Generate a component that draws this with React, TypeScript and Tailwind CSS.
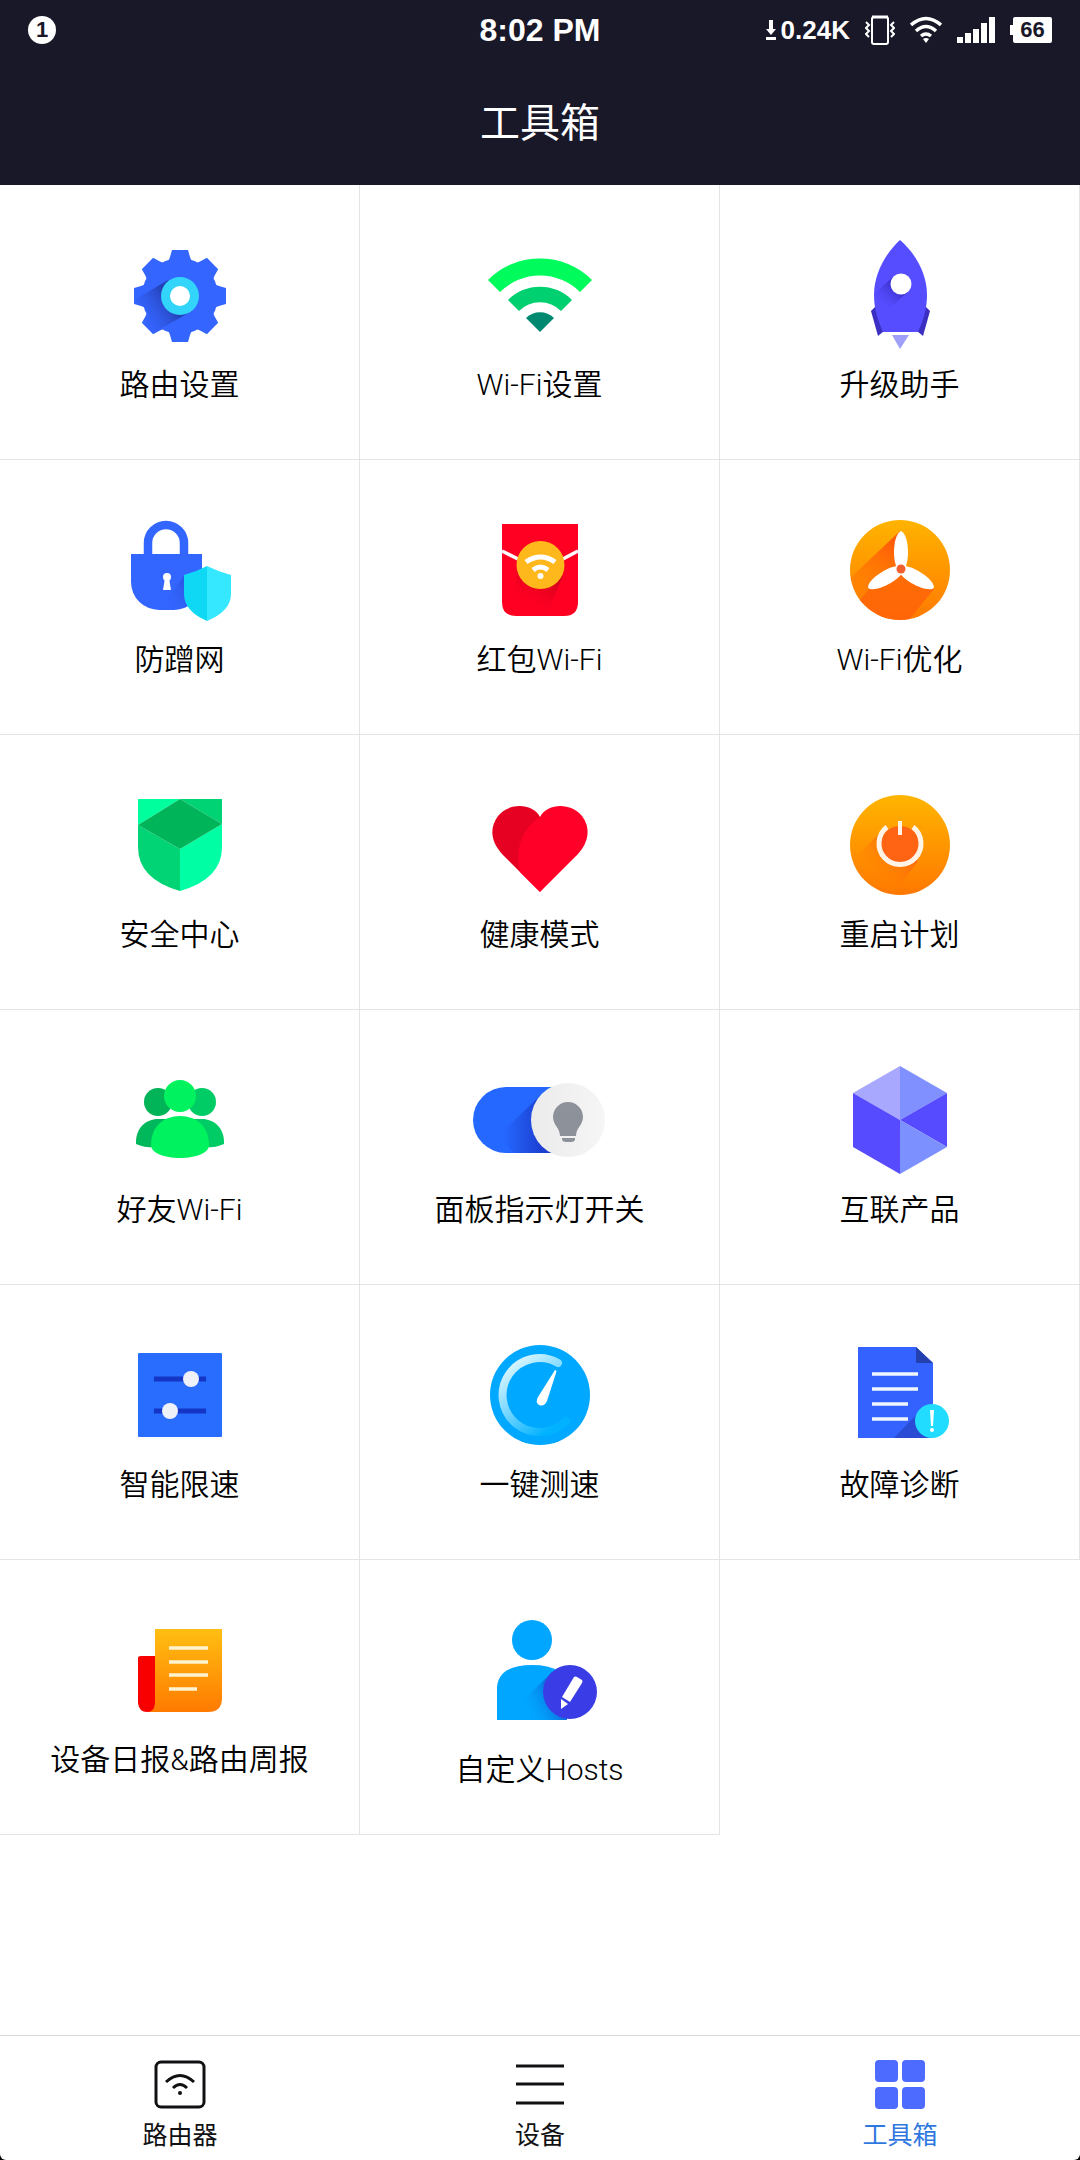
import { useState } from 'react'
import type { ReactNode } from 'react'

type Tool = {
  label: string
  icon: ReactNode
  tall?: boolean
}

type Tab = {
  key: string
  label: string
  icon: ReactNode
}

const TEETH = [0, 45, 90, 135, 180, 225, 270, 315]

const GearIcon = (
  <>
    <defs>
      <linearGradient id="gear-shade" x1="62" y1="66" x2="28" y2="88" gradientUnits="userSpaceOnUse">
        <stop offset="0" stopColor="#2442b8" />
        <stop offset="1" stopColor="#3565ff" stopOpacity="0" />
      </linearGradient>
    </defs>
    <circle cx="72" cy="61" r="38" fill="#3565ff" />
    {TEETH.map((deg) => (
      <path key={deg} d="M60 27 L62 22 L64 15 H80 L82 22 L84 27Z" fill="#3565ff" transform={`rotate(${deg} 72 61)`} />
    ))}
    <path d="M60 45 L28 64 L30 70 L37 72 L41 82 L36 90 L45 98 L84 76Z" fill="url(#gear-shade)" />
    <circle cx="72" cy="61" r="19" fill="#33d4fa" />
    <circle cx="72" cy="61" r="10" fill="#fff" />
  </>
)

const WifiIcon = (
  <>
    <path d="M20 45 A73.5 73.5 0 0 1 124 45 L112 57 A57 57 0 0 0 32 57Z" fill="#00fc5c" />
    <path d="M40 65 A45 45 0 0 1 104 65 L93 76 A29.5 29.5 0 0 0 51 76Z" fill="#00d070" />
    <path d="M58 83 A20 20 0 0 1 86 83 L72 97Z" fill="#008970" />
  </>
)

const RocketIcon = (
  <>
    <defs>
      <linearGradient id="rocket-shade" x1="70" y1="52" x2="52" y2="72" gradientUnits="userSpaceOnUse">
        <stop offset="0" stopColor="#3b2fc8" />
        <stop offset="1" stopColor="#554dff" stopOpacity="0" />
      </linearGradient>
    </defs>
    <path d="M48 71 L43 76 L50 101 L56 96Z" fill="#3a2fc0" />
    <path d="M97 71 L102 76 L95 101 L89 96Z" fill="#3a2fc0" />
    <path d="M72 5 C58 18 46 38 46 60 C46 74 50 86 55 97 H90 C95 86 99 74 99 60 C99 38 87 18 72 5Z" fill="#554dff" />
    <path d="M65 42 L47 58 Q46 72 54 80 L81 56Z" fill="url(#rocket-shade)" />
    <circle cx="73" cy="49" r="10.5" fill="#fff" />
    <path d="M64 100 H81 L72 114Z" fill="#a09ffa" />
  </>
)

const LockIcon = (
  <>
    <defs>
      <linearGradient id="lock-shade" x1="96" y1="75" x2="56" y2="96" gradientUnits="userSpaceOnUse">
        <stop offset="0" stopColor="#2343c4" />
        <stop offset="1" stopColor="#3366ff" stopOpacity="0" />
      </linearGradient>
    </defs>
    <path d="M40 46 V33 A18 18 0 0 1 76 33 V46" fill="none" stroke="#3366ff" strokeWidth="8.5" />
    <path d="M23 44 H94 V72 A28 28 0 0 1 66 100 H51 A28 28 0 0 1 23 72Z" fill="#3366ff" />
    <path d="M94 60 L76 66 L50 100 H66 A28 28 0 0 0 94 72Z" fill="url(#lock-shade)" />
    <circle cx="59" cy="67" r="4" fill="#fff" />
    <path d="M57 68 H61 L63 80 H55Z" fill="#fff" />
    <path d="M99 56 Q88 62 76 65 V84 Q76 101 99 111Z" fill="#0fd8f4" />
    <path d="M99 56 Q111 62 123 65 V84 Q123 101 99 111Z" fill="#35e8ff" />
  </>
)

const RedPacketIcon = (
  <>
    <defs>
      <linearGradient id="packet-shade" x1="72" y1="60" x2="50" y2="96" gradientUnits="userSpaceOnUse">
        <stop offset="0" stopColor="#d4001c" />
        <stop offset="1" stopColor="#ff0022" stopOpacity="0" />
      </linearGradient>
    </defs>
    <path d="M34 14 H110 V92 Q110 106 96 106 H48 Q34 106 34 92Z" fill="#ff0022" />
    <path d="M49 58 L44 106 H78 L95 66Z" fill="url(#packet-shade)" />
    <path d="M34 41 L52 50 M110 41 L93 50" stroke="#fff" strokeWidth="3.5" />
    <circle cx="72.5" cy="55" r="24" fill="#ffb81c" />
    <path d="M58 52 Q72.5 42 87 52 M65 60 Q72.5 54 80 60" fill="none" stroke="#fff" strokeWidth="5" />
    <circle cx="72.5" cy="66" r="3" fill="#fff" />
  </>
)

const FanIcon = (
  <>
    <defs>
      <linearGradient id="fan-bg" x1="0" y1="10" x2="0" y2="110" gradientUnits="userSpaceOnUse">
        <stop offset="0" stopColor="#ffb300" />
        <stop offset="1" stopColor="#ff7a00" />
      </linearGradient>
      <linearGradient id="fan-shade" x1="80" y1="40" x2="42" y2="100" gradientUnits="userSpaceOnUse">
        <stop offset="0" stopColor="#ff5a0a" />
        <stop offset="1" stopColor="#ff6a00" stopOpacity="0.1" />
      </linearGradient>
      <clipPath id="fan-clip">
        <circle cx="72" cy="60" r="50" />
      </clipPath>
    </defs>
    <circle cx="72" cy="60" r="50" fill="url(#fan-bg)" />
    <g clipPath="url(#fan-clip)">
      <path d="M72 21 L18 72 L24 98 L42 78 L73 60Z" fill="url(#fan-shade)" />
      <path d="M73 62 L42 78 L30 92 L60 116 L76 116 L106 79Z" fill="#ff5f0a" opacity="0.75" />
    </g>
    {[0, 120, 240].map((deg) => (
      <path
        key={deg}
        d="M73 21 C78 23 80 34 80 42 C80 49 79 53 77 59 H69 C67 53 66 49 66 42 C66 34 68 23 73 21Z"
        fill="#fff"
        transform={`rotate(${deg} 73 59)`}
      />
    ))}
    <circle cx="73" cy="59" r="4.5" fill="#f0602c" />
  </>
)

const ShieldIcon = (
  <>
    <path d="M30 14 H72 L30 40Z" fill="#00ff9d" />
    <path d="M72 14 H114 V39Z" fill="#00d373" />
    <path d="M30 40 L72 64 V106 Q30 94 30 62Z" fill="#00d474" />
    <path d="M114 39 L72 64 V106 Q114 94 114 62Z" fill="#00ffa4" />
    <path d="M72 14 L114 39 L72 64 L30 40Z" fill="#00b45a" />
  </>
)

const HeartIcon = (
  <>
    <path d="M72 32 C64 17 40 18 30 31 C21 43 23 57 34 69 L72 107 L80 60Z" fill="#e60022" />
    <path d="M72 32 C80 17 104 18 114 31 C123 43 121 57 110 69 L72 107 L52 87 C46 62 56 42 72 32Z" fill="#ff0028" />
  </>
)

const PowerIcon = (
  <>
    <defs>
      <linearGradient id="power-bg" x1="0" y1="10" x2="0" y2="110" gradientUnits="userSpaceOnUse">
        <stop offset="0" stopColor="#ffb500" />
        <stop offset="1" stopColor="#ff7800" />
      </linearGradient>
      <linearGradient id="power-shade" x1="76" y1="66" x2="44" y2="98" gradientUnits="userSpaceOnUse">
        <stop offset="0" stopColor="#ff6a0a" />
        <stop offset="1" stopColor="#ff8a00" stopOpacity="0" />
      </linearGradient>
    </defs>
    <circle cx="72" cy="60" r="50" fill="url(#power-bg)" />
    <path d="M54 46 L28 72 Q36 98 66 108 L90 76Z" fill="url(#power-shade)" />
    <circle cx="72" cy="61" r="20" fill="#ff6414" />
    <path d="M59 42 A21 21 0 1 0 85 42" fill="none" stroke="#fff4e6" strokeWidth="5" />
    <path d="M72 36 V50" stroke="#fff4e6" strokeWidth="4" />
  </>
)

const FriendsIcon = (
  <>
    <circle cx="50" cy="42" r="14" fill="#00b457" />
    <circle cx="94" cy="42" r="14" fill="#00cc66" />
    <path d="M28 82 C28 68 38 59 50 59 H66 V86 Q40 90 28 84Z" fill="#00b85c" />
    <path d="M116 82 C116 68 106 59 94 59 H78 V86 Q104 90 116 84Z" fill="#00cc66" />
    <circle cx="72" cy="36" r="16" fill="#00f25e" />
    <path d="M43 85 C43 67 55 56 72 56 C89 56 101 67 101 85 C101 93 88 98 72 98 C56 98 43 93 43 85Z" fill="#00f25e" />
  </>
)

const ToggleIcon = (
  <>
    <defs>
      <linearGradient id="toggle-shade" x1="36" y1="0" x2="74" y2="0" gradientUnits="userSpaceOnUse">
        <stop offset="0" stopColor="#2468ff" />
        <stop offset="1" stopColor="#1c3fd0" />
      </linearGradient>
      <linearGradient id="toggle-knob" x1="64" y1="0" x2="138" y2="0" gradientUnits="userSpaceOnUse">
        <stop offset="0" stopColor="#ebebeb" />
        <stop offset="1" stopColor="#f6f6f6" />
      </linearGradient>
    </defs>
    <path d="M100 27 H38 A33 33 0 0 0 38 93 H100Z" fill="#2468ff" />
    <path d="M76 32 L30 76 L46 93 H100Z" fill="url(#toggle-shade)" />
    <circle cx="100" cy="60" r="37" fill="url(#toggle-knob)" />
    <path d="M100 42 A15 15 0 0 1 115 57 C115 65 108 68 108 76 H92 C92 68 85 65 85 57 A15 15 0 0 1 100 42Z" fill="#8d9199" />
    <path d="M94 78 H107 V80 Q106 82 103 82 H98 Q95 82 94 80Z" fill="#8d9199" />
  </>
)

const CubeIcon = (
  <>
    <path d="M72 6 L25 33 L72 60Z" fill="#a8a8ff" />
    <path d="M72 6 L119 33 L72 60Z" fill="#8091ff" />
    <path d="M25 33 L72 60 V114 L25 87Z" fill="#564bff" />
    <path d="M119 33 V87 L72 60Z" fill="#564bff" />
    <path d="M72 60 L119 87 L72 114Z" fill="#7d90ff" />
  </>
)

const LimitIcon = (
  <>
    <rect x="30" y="18" width="84" height="84" rx="1" fill="#296dff" />
    <path d="M46 44 H98 M46 76 H98" stroke="#1535c4" strokeWidth="5" />
    <circle cx="83" cy="44" r="8" fill="#eff1f8" />
    <circle cx="62" cy="76" r="8" fill="#eff1f8" />
  </>
)

const SpeedIcon = (
  <>
    <defs>
      <linearGradient id="speed-arc" x1="52" y1="26" x2="96" y2="84" gradientUnits="userSpaceOnUse">
        <stop offset="0" stopColor="#d0f3ff" />
        <stop offset="0.5" stopColor="#6fd4ff" />
        <stop offset="1" stopColor="#00b2ff" />
      </linearGradient>
    </defs>
    <circle cx="72" cy="60" r="50" fill="#00a8ff" />
    <path d="M90 28 A37 37 0 1 0 98 86" fill="none" stroke="url(#speed-arc)" strokeWidth="8" strokeLinecap="round" />
    <path d="M87 35 Q89 35 88 38 L79 66 Q76 72 71 70 Q67 67 70 62Z" fill="#fff" />
  </>
)

const DiagnoseIcon = (
  <>
    <path d="M30 12 H88 L105 28 V103 H30Z" fill="#3462ff" />
    <path d="M88 12 V28 H105Z" fill="#2440ae" />
    <path d="M92 76 L66 103 H105Z" fill="#2a4bd4" />
    <path d="M44 39 H90 M44 54 H90 M44 69 H80 M44 84 H80" stroke="#f2f6ff" strokeWidth="3.5" />
    <circle cx="104" cy="86" r="17" fill="#22dcff" />
    <path d="M102 75 H106 L105 91 H103Z" fill="#fff" />
    <circle cx="104" cy="95" r="2" fill="#fff" />
  </>
)

const ReportIcon = (
  <>
    <defs>
      <linearGradient id="report-bg" x1="0" y1="19" x2="0" y2="102" gradientUnits="userSpaceOnUse">
        <stop offset="0" stopColor="#ffbf12" />
        <stop offset="1" stopColor="#ff7a00" />
      </linearGradient>
    </defs>
    <path d="M47 19 H114 V88 Q114 102 100 102 H38 Q47 100 47 92Z" fill="url(#report-bg)" />
    <path d="M33 46 H47 V94 Q46 102 39 102 Q31 102 30 93 V48 Q30 46 33 46Z" fill="#f80000" />
    <path d="M61 38 H100 M61 52 H100 M61 65 H100 M61 79 H89" stroke="#fff3cf" strokeWidth="3.5" />
  </>
)

const HostsIcon = (
  <>
    <defs>
      <linearGradient id="hosts-shade" x1="84" y1="86" x2="56" y2="100" gradientUnits="userSpaceOnUse">
        <stop offset="0" stopColor="#0b74e0" />
        <stop offset="1" stopColor="#00a6ff" stopOpacity="0" />
      </linearGradient>
    </defs>
    <circle cx="64" cy="30" r="20" fill="#00a6ff" />
    <path d="M29 110 V78 Q30 55 64 55 Q98 55 99 78 V110Z" fill="#00a6ff" />
    <path d="M84 62 L50 96 V110 H99Z" fill="url(#hosts-shade)" />
    <circle cx="102" cy="82" r="27" fill="#3a3ce6" />
    <path d="M106 67 Q107 66 109 67 L114 70 Q115 71 114 73 L102 92 L94 87Z" fill="#fff" />
    <path d="M93 89 L100 94 L93 99Z" fill="#fff" />
  </>
)

const TOOLS: Tool[] = [
  { label: '路由设置', icon: GearIcon },
  { label: 'Wi-Fi设置', icon: WifiIcon },
  { label: '升级助手', icon: RocketIcon },
  { label: '防蹭网', icon: LockIcon },
  { label: '红包Wi-Fi', icon: RedPacketIcon },
  { label: 'Wi-Fi优化', icon: FanIcon },
  { label: '安全中心', icon: ShieldIcon },
  { label: '健康模式', icon: HeartIcon },
  { label: '重启计划', icon: PowerIcon },
  { label: '好友Wi-Fi', icon: FriendsIcon },
  { label: '面板指示灯开关', icon: ToggleIcon },
  { label: '互联产品', icon: CubeIcon },
  { label: '智能限速', icon: LimitIcon },
  { label: '一键测速', icon: SpeedIcon },
  { label: '故障诊断', icon: DiagnoseIcon },
  { label: '设备日报&路由周报', icon: ReportIcon },
  { label: '自定义Hosts', icon: HostsIcon, tall: true },
]

const TABS: Tab[] = [
  {
    key: 'router',
    label: '路由器',
    icon: (
      <>
        <rect x="2" y="4" width="48" height="45" rx="5" fill="none" stroke="currentColor" strokeWidth="3" />
        <path d="M12 24 Q26 11 40 24 M19 30 Q26 23 33 30" fill="none" stroke="currentColor" strokeWidth="3" />
        <circle cx="26" cy="35" r="2" fill="currentColor" />
      </>
    ),
  },
  {
    key: 'devices',
    label: '设备',
    icon: <path d="M2 8 H50 M2 26 H50 M2 45 H50" stroke="currentColor" strokeWidth="3" />,
  },
  {
    key: 'tools',
    label: '工具箱',
    icon: (
      <g fill="#4d6bff">
        <rect x="1" y="2" width="23" height="22" rx="4" />
        <rect x="28" y="2" width="23" height="22" rx="4" />
        <rect x="1" y="29" width="23" height="22" rx="4" />
        <rect x="28" y="29" width="23" height="22" rx="4" />
      </g>
    ),
  },
]

function StatusBar() {
  return (
    <div className="grid h-[60px] grid-cols-[1fr_auto_1fr] items-center px-[28px] font-bold">
      <span className="flex size-[28px] items-center justify-center rounded-full bg-white text-[22px] leading-none text-[#191829]">
        1
      </span>
      <span className="text-[32px] leading-none">8:02 PM</span>
      <div className="flex items-center justify-end gap-[15px]">
        <span className="flex items-center gap-1 text-[26px] leading-none">
          <svg className="h-[22px] w-[12px]" viewBox="0 0 12 22" aria-hidden="true">
            <path d="M4 1 H8 V10 H11 L6 16 L1 10 H4Z M1 18 H11 V21 H1Z" fill="currentColor" />
          </svg>
          0.24K
        </span>
        <svg className="h-[30px] w-[30px]" viewBox="0 0 30 30" fill="none" stroke="currentColor" aria-hidden="true">
          <rect x="7" y="2" width="16" height="27" rx="2" strokeWidth="2" />
          <path d="M7 2 H23" strokeWidth="3" />
          <path d="M1 7 L4 10 L1 13 L4 16 L1 19 L4 22 M29 7 L26 10 L29 13 L26 16 L29 19 L26 22" strokeWidth="2" />
        </svg>
        <svg className="h-[28px] w-[32px]" viewBox="0 0 32 28" aria-hidden="true">
          <path
            d="M1 9 Q16 -4 31 9 M6 15 Q16 6 26 15 M11 20 Q16 16 21 20"
            fill="none"
            stroke="currentColor"
            strokeWidth="3.5"
          />
          <path d="M13 23 Q16 21 19 23 L16 27Z" fill="currentColor" />
        </svg>
        <svg className="h-[26px] w-[38px]" viewBox="0 0 38 26" fill="currentColor" aria-hidden="true">
          <rect x="0" y="20" width="6" height="6" />
          <rect x="8" y="16" width="6" height="10" />
          <rect x="16" y="12" width="6" height="14" />
          <rect x="24" y="6" width="6" height="20" />
          <rect x="32" y="0" width="6" height="26" />
        </svg>
        <span className="flex items-center">
          <span className="h-[10px] w-[3px] bg-white" />
          <span className="flex h-[26px] w-[39px] items-center justify-center rounded-xs bg-white text-[22px] leading-none text-[#191829]">
            66
          </span>
        </span>
      </div>
    </div>
  )
}

export default function App() {
  const [active, setActive] = useState('tools')

  return (
    <div className="bg-black font-['Liberation_Sans','Noto_Sans_CJK_SC',sans-serif]">
      <div className="flex min-h-screen flex-col overflow-hidden rounded-b-[6px] bg-white text-black">
        <header className="bg-[#191829] text-white">
          <StatusBar />
          <h1 className="flex h-[125px] items-center justify-center text-[40px]">工具箱</h1>
        </header>

        <main className="grid flex-1 grid-cols-3 content-start">
          {TOOLS.map((tool) => (
            <button
              key={tool.label}
              type="button"
              className="flex h-[275px] flex-col items-center gap-[10px] border-r border-b border-[#e4e4e4] pt-[50px]"
            >
              <svg
                className={tool.tall ? 'h-[130px] w-[144px]' : 'h-[120px] w-[144px]'}
                viewBox={tool.tall ? '0 0 144 130' : '0 0 144 120'}
                aria-hidden="true"
              >
                {tool.icon}
              </svg>
              <span className="font-['Roboto','Noto_Sans_CJK_SC',sans-serif] text-[30px] leading-[40px] font-[350]">
                {tool.label}
              </span>
            </button>
          ))}
        </main>

        {/* Bottom tabs */}
        <nav className="grid grid-cols-3 border-t border-[#d9dcdc]">
          {TABS.map((tab) => (
            <a
              key={tab.key}
              href={`#${tab.key}`}
              onClick={() => setActive(tab.key)}
              className={`flex h-[124px] flex-col items-center gap-[7px] pt-[22px] ${
                active === tab.key ? 'text-[#2f78e0]' : 'text-[#111114]'
              }`}
            >
              <svg className="size-[52px]" viewBox="0 0 52 52" aria-hidden="true">
                {tab.icon}
              </svg>
              <span className="text-[25px] leading-[36px]">{tab.label}</span>
            </a>
          ))}
        </nav>
      </div>
    </div>
  )
}
